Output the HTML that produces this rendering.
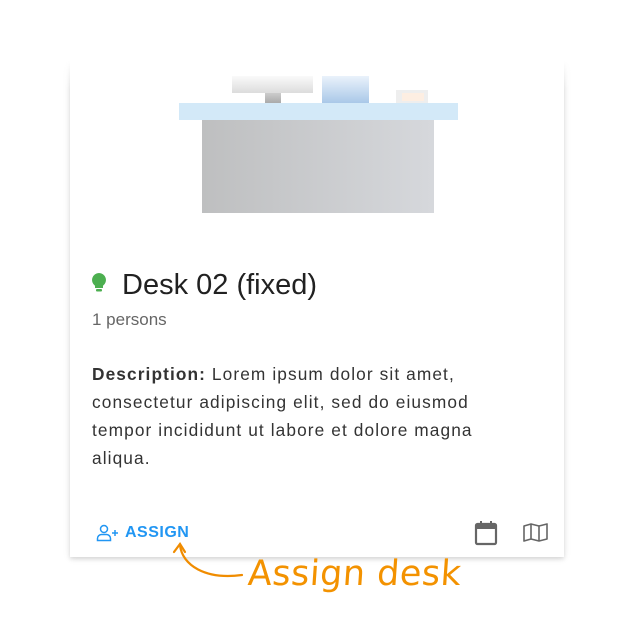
<!DOCTYPE html>
<html><head><style>
body{margin:0;width:624px;height:620px;background:#fff;position:relative;overflow:hidden;font-family:"Liberation Sans",Arial,sans-serif}
.card{position:absolute;left:70px;top:60px;width:494px;height:497px;background:#fff;box-shadow:0 2px 4px rgba(0,0,0,.12),0 1px 8px rgba(0,0,0,.08)}
.fade{position:absolute;left:55px;top:30px;width:530px;height:60px;background:linear-gradient(#fff 50%,rgba(255,255,255,0))}
.t{position:absolute}
</style></head><body>
<div class="card"></div>
<div class="fade"></div>
<div class="t" style="left:232px;top:76px;width:81px;height:17px;background:linear-gradient(#fafafa,#dcdcdc)"></div>
<div class="t" style="left:265px;top:93px;width:16px;height:10px;background:linear-gradient(#ccc,#aaa)"></div>
<div class="t" style="left:322px;top:76px;width:47px;height:27px;background:linear-gradient(#eaf2fb,#a9c8e8)"></div>
<div class="t" style="left:396px;top:90px;width:32px;height:13px;background:#eee"></div>
<div class="t" style="left:402px;top:93px;width:22px;height:8px;background:#fdeee2"></div>
<div class="t" style="left:179px;top:103px;width:279px;height:17px;background:#d3e9f8"></div>
<div class="t" style="left:202px;top:120px;width:232px;height:93px;background:linear-gradient(90deg,#bebfc0,#d6d8dc)"></div>
<svg class="t" style="left:91px;top:272px" width="16" height="24" viewBox="0 0 16 24"><path d="M8 1a7 7 0 0 0-4 12.7V16h8v-2.3A7 7 0 0 0 8 1z" fill="#4caf50"/><rect x="5" y="17" width="6" height="2.5" rx="1" fill="#4caf50"/></svg>
<div class="t" style="left:122px;top:269px;font-size:29px;color:#212121">Desk 02 (fixed)</div>
<div class="t" style="left:92px;top:310px;font-size:17px;color:#666">1 persons</div>
<div class="t" style="left:92px;top:360px;width:420px;font-size:17.3px;letter-spacing:1.1px;line-height:28px;color:#333;white-space:nowrap"><b>Description:</b> Lorem ipsum dolor sit amet,<br>consectetur adipiscing elit, sed do eiusmod<br>tempor incididunt ut labore et dolore magna<br>aliqua.</div>
<svg class="t" style="left:96px;top:524px" width="24" height="18" viewBox="0 0 24 18" fill="none" stroke="#2196f3" stroke-width="1.5"><circle cx="8" cy="5" r="3.5"/><path d="M1.5 16.5v-2a4 4 0 0 1 4-4h5a4 4 0 0 1 4 4v2z"/><path d="M19 6v6M16 9h6"/></svg>
<div class="t" style="left:125px;top:524px;font-size:16px;font-weight:bold;color:#2196f3;letter-spacing:.5px">ASSIGN</div>
<svg class="t" style="left:474px;top:520px" width="24" height="26" viewBox="0 0 24 26"><rect x="2" y="4" width="20" height="20" rx="1.5" fill="none" stroke="#666" stroke-width="2.2"/><rect x="2" y="4" width="20" height="5" fill="#666"/><rect x="6" y="1" width="2" height="4" fill="#666"/><rect x="16" y="1" width="2" height="4" fill="#666"/></svg>
<svg class="t" style="left:523px;top:523px" width="26" height="20" viewBox="0 0 26 20" fill="none" stroke="#666" stroke-width="1.6" stroke-linejoin="round"><path d="M1 3l7-2 8 2 8-2v15l-8 2-8-2-7 2z M8 1v15 M16 3v15"/></svg>
<svg class="t" style="left:170px;top:540px" width="80" height="45" viewBox="0 0 80 45" fill="none" stroke="#f08c00" stroke-width="2.2" stroke-linecap="round"><path d="M10 5c2 20 25 35 62 30"/><path d="M4 12l6-8 5 8"/></svg>
<div class="t" style="left:248px;top:554px;font-size:35px;color:#f39200;font-family:'DejaVu Sans',sans-serif;letter-spacing:0.5px;transform:skewX(-4deg)">Assign desk</div>
</body></html>
